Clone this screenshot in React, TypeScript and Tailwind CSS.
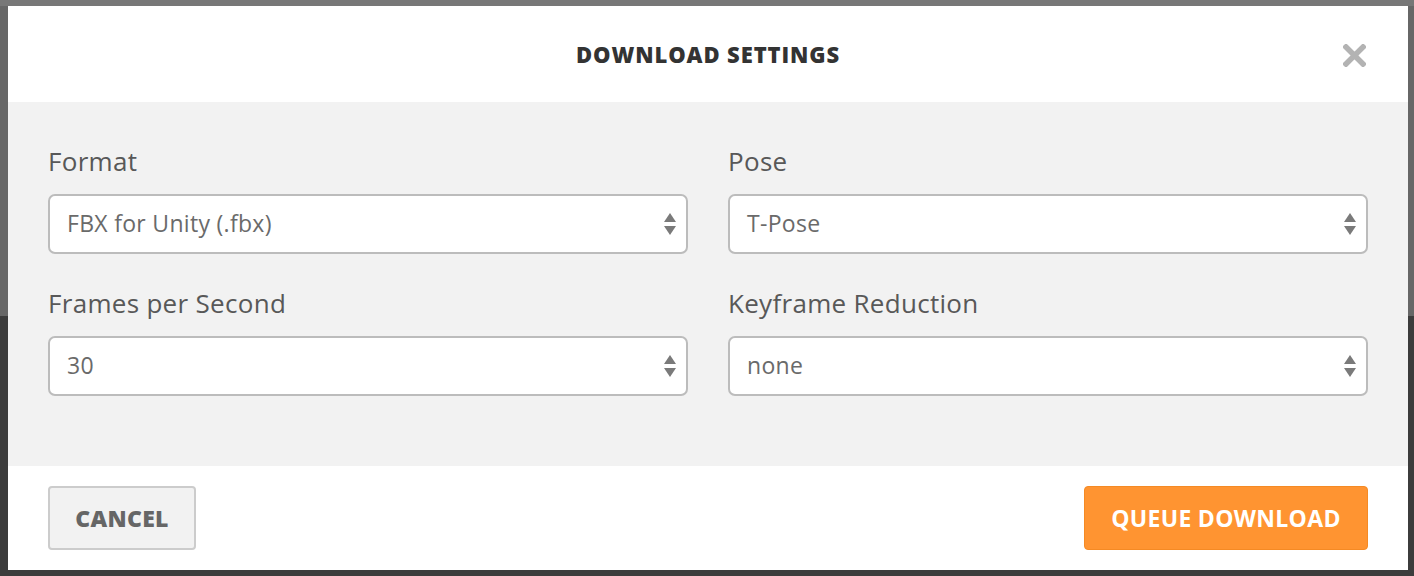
import React from "react";

const font = { fontFamily: '"Open Sans", "Noto Sans", sans-serif' };

function SelectBox({ value }: { value: string }) {
  return (
    <div className="relative h-[60px] w-full rounded-[7px] border-2 border-[#bcbcbc] bg-white flex items-center pl-[17px]">
      <span className="text-[23px] leading-[30px] tracking-[0.3px] text-[#6a6a6a] -mt-[2px]">{value}</span>
      <svg
        className="absolute right-[9px] top-1/2 -translate-y-1/2"
        width="14"
        height="26"
        viewBox="0 0 14 26"
      >
        <polygon points="7,2 13,11 1,11" fill="#7a7a7a" />
        <polygon points="1,15 13,15 7,24" fill="#7a7a7a" />
      </svg>
    </div>
  );
}

function Field({ label, value }: { label: string; value: string }) {
  return (
    <div className="flex flex-col">
      <label className="h-[32px] leading-[30px] text-[26px] tracking-[0.3px] text-[#585858] mb-[16px]">{label}</label>
      <SelectBox value={value} />
    </div>
  );
}

export default function App() {
  return (
    <div
      className="h-[576px] w-full bg-[linear-gradient(to_bottom,#777_6px,#676767_6px,#676767_316px,#3c3c3c_316px)] pt-[6px] pl-2 overflow-hidden"
      style={font}
    >
      <div className="w-[1400px] h-[564px] bg-white flex flex-col">
        {/* header */}
        <div className="relative h-[96px] shrink-0 flex items-center justify-center">
          <h2 className="text-[22px] font-extrabold text-[#333] tracking-[0.9px]">DOWNLOAD SETTINGS</h2>
          <button className="absolute right-[42px] top-[38px] w-[23px] h-[23px]">
            <svg width="23" height="23" viewBox="0 0 23 23">
              <path d="M3 3 L20 20 M20 3 L3 20" stroke="#b3b3b3" strokeWidth="5.5" strokeLinecap="square" />
            </svg>
          </button>
        </div>

        {/* body */}
        <div className="h-[364px] shrink-0 bg-[#f2f2f2] px-10 pt-[44px]">
          <div className="grid grid-cols-2 gap-x-10 gap-y-[34px]">
            <Field label="Format" value="FBX for Unity (.fbx)" />
            <Field label="Pose" value="T-Pose" />
            <Field label="Frames per Second" value="30" />
            <Field label="Keyframe Reduction" value="none" />
          </div>
        </div>

        {/* footer */}
        <div className="flex-1 flex items-center justify-between px-10">
          <button className="h-[64px] w-[148px] rounded-[4px] border-2 border-[#cccccc] bg-[#f2f2f2] text-[23px] font-extrabold tracking-[0.3px] text-[#666]">
            CANCEL
          </button>
          <button className="h-[64px] w-[284px] rounded-[4px] border border-[#f58a24] bg-[#ff9431] text-[23px] font-bold tracking-[0.3px] text-white">
            QUEUE DOWNLOAD
          </button>
        </div>
      </div>
    </div>
  );
}
